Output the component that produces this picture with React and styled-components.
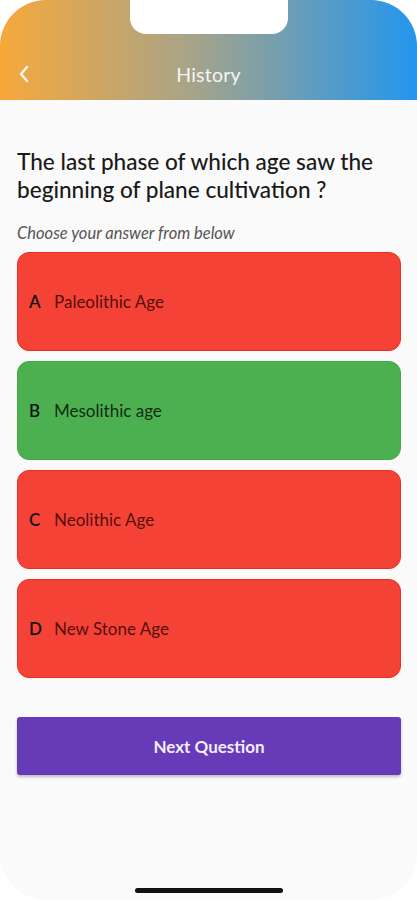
import styled, { createGlobalStyle } from 'styled-components';

const GlobalStyle = createGlobalStyle`
    html, body {
        margin: 0;
        padding: 0;
        background: #ffffff;
        font-family: Lato, "Noto Sans", sans-serif;
    }
`;

const options = [
    {letter: 'A', label: 'Paleolithic Age', correct: false},
    {letter: 'B', label: 'Mesolithic age', correct: true},
    {letter: 'C', label: 'Neolithic Age', correct: false},
    {letter: 'D', label: 'New Stone Age', correct: false},
];

const Phone = styled.div`
    width: 417px;
    height: 900px;
    border-radius: 46px;
    overflow: hidden;
    background: #fafafa;
    display: flex;
    flex-direction: column;
`;

const Header = styled.header`
    position: relative;
    height: 100px;
    background: linear-gradient(90deg, #f7a83b 0%, #a9a487 45%, #2396ee 100%);
    display: flex;
    align-items: flex-end;
`;

const Notch = styled.div`
    position: absolute;
    top: 0;
    left: 130px;
    width: 158px;
    height: 34px;
    background: #ffffff;
    border-radius: 0 0 16px 16px;
`;

const HeaderBar = styled.div`
    flex: 1;
    height: 50px;
    display: flex;
    align-items: center;
    justify-content: center;
    position: relative;
`;

const BackButton = styled.button`
    position: absolute;
    left: 12px;
    top: 12px;
    width: 24px;
    height: 24px;
    padding: 0;
    border: none;
    background: none;
    display: flex;
    align-items: center;
    justify-content: center;
`;

const Title = styled.h1`
    margin: 0 0 2px;
    font-size: 19.5px;
    font-weight: 400;
    color: #f4f4f4;
    letter-spacing: 0.2px;
`;

const Content = styled.main`
    padding: 48px 16px 0 17px;
    display: flex;
    flex-direction: column;
`;

const Question = styled.h2`
    margin: 0;
    font-size: 22.6px;
    line-height: 28px;
    font-weight: 500;
    color: #1a1a1a;
`;

const Hint = styled.p`
    margin: 20px 0 10px;
    font-size: 16.5px;
    line-height: 18px;
    font-style: italic;
    color: #555555;
`;

const OptionList = styled.div`
    display: flex;
    flex-direction: column;
    gap: 10px;
`;

const Option = styled.div`
    height: 99px;
    box-sizing: border-box;
    border-radius: 12px;
    background: ${({correct}) => correct ? '#4caf50' : '#f44336'};
    border: 1px solid ${({correct}) => correct ? '#43a947' : '#ee2d22'};
    display: flex;
    align-items: center;
    padding-left: 11px;
    gap: 9px;
`;

const Letter = styled.span`
    font-size: 17px;
    font-weight: 600;
    color: #141414;
    width: 16px;
`;

const Label = styled.span`
    font-size: 17px;
    color: ${({correct}) => correct ? 'rgba(0, 0, 0, 0.78)' : 'rgba(40, 0, 0, 0.8)'};
`;

const NextButton = styled.button`
    margin-top: 39px;
    height: 58px;
    border: none;
    border-radius: 3px;
    background: #673ab7;
    color: #f3eefb;
    font-family: Lato, "Noto Sans", sans-serif;
    font-size: 17px;
    font-weight: 700;
    box-shadow: 0 2px 3px rgba(0, 0, 0, 0.25);
`;

const HomeIndicator = styled.div`
    margin: auto auto 7px;
    width: 148px;
    height: 5px;
    border-radius: 3px;
    background: #111111;
`;

const App = () => {
    return (
        <>
        <GlobalStyle />
        <Phone>
            <Header>
                <Notch />
                <HeaderBar>
                    <BackButton aria-label="Back">
                        <svg width="14" height="20" viewBox="0 0 14 20" fill="none">
                            <path d="M10 3 L4 10 L10 17" stroke="#f6f6f6" strokeWidth="2.4" strokeLinecap="round" strokeLinejoin="round" />
                        </svg>
                    </BackButton>
                    <Title>History</Title>
                </HeaderBar>
            </Header>
            <Content>
                <Question>The last phase of which age saw the beginning of plane cultivation ?</Question>
                <Hint>Choose your answer from below</Hint>
                <OptionList>
                    {options.map((o) => (
                        <Option key={o.letter} correct={o.correct}>
                            <Letter>{o.letter}</Letter>
                            <Label correct={o.correct}>{o.label}</Label>
                        </Option>
                    ))}
                </OptionList>
                <NextButton>Next Question</NextButton>
            </Content>
            <HomeIndicator />
        </Phone>
        </>
    )
}

export default App;
